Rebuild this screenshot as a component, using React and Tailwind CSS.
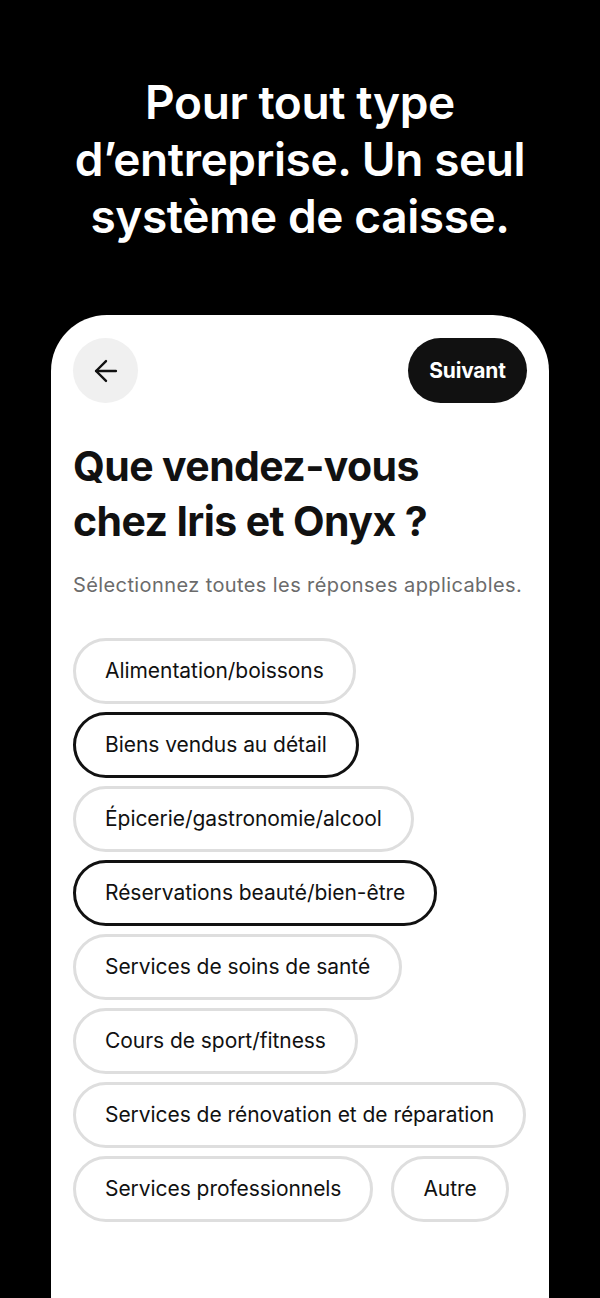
import { ArrowLeft } from 'lucide-react';

const options = [
  { label: 'Alimentation/boissons', selected: false },
  { label: 'Biens vendus au détail', selected: true },
  { label: 'Épicerie/gastronomie/alcool', selected: false },
  { label: 'Réservations beauté/bien-être', selected: true },
  { label: 'Services de soins de santé', selected: false },
  { label: 'Cours de sport/fitness', selected: false },
  { label: 'Services de rénovation et de réparation', selected: false },
  { label: 'Services professionnels', selected: false },
  { label: 'Autre', selected: false },
];

export default function App() {
  return (
    <div
      className="w-[600px] h-[1298px] bg-black flex flex-col items-center overflow-hidden"
      style={{ fontFamily: 'Inter, "Liberation Sans", sans-serif' }}
    >
      <h1 className="pt-[74px] text-white text-center text-[46px] leading-[57px] font-semibold tracking-[-0.4px]">
        Pour tout type
        <br />
        d’entreprise. Un seul
        <br />
        système de caisse.
      </h1>

      <div className="mt-[70px] w-[498px] flex-1 bg-white rounded-t-[56px] px-[22px] pt-[23px]">
        <div className="flex items-center justify-between">
          <button className="w-[65px] h-[65px] rounded-full bg-[#f0f0f0] flex items-center justify-center text-[#111]">
            <ArrowLeft className="w-[34px] h-[34px]" strokeWidth={1.7} />
          </button>
          <button className="h-[65px] w-[119px] rounded-full bg-[#111] text-white text-[21px] font-bold tracking-[-0.2px]">
            Suivant
          </button>
        </div>

        <h2 className="mt-[36px] text-[#111] text-[41px] leading-[55px] font-bold tracking-[-0.6px]">
          Que vendez-vous
          <br />
          chez Iris et Onyx ?
        </h2>

        <p className="mt-[22px] text-[#6b6b6b] text-[20px] leading-[28px] tracking-[0.4px]">
          Sélectionnez toutes les réponses applicables.
        </p>

        <div className="mt-[39px] flex flex-wrap gap-x-[18px] gap-y-[8px]">
          {options.map((o) => (
            <button
              key={o.label}
              className={
                o.selected
                  ? 'h-[66px] px-[29px] rounded-full border-[3px] border-[#111] text-[#111] text-[21px] tracking-[-0.05px] whitespace-nowrap bg-white'
                  : 'h-[66px] px-[29px] rounded-full border-[3px] border-[#dedede] text-[#111] text-[21px] tracking-[-0.05px] whitespace-nowrap bg-white'
              }
            >
              {o.label}
            </button>
          ))}
        </div>
      </div>
    </div>
  );
}
